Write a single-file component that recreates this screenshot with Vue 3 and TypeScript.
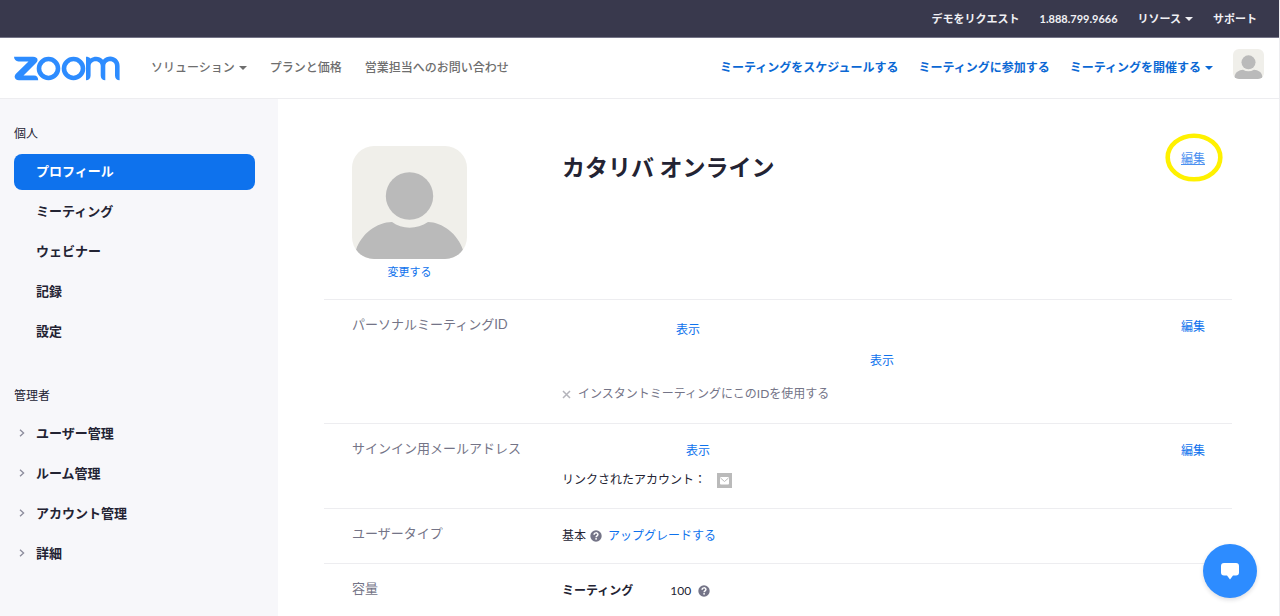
<script setup lang="ts">
interface NavItem {
  label: string
  menu?: boolean
}

const topLinks: NavItem[] = [
  { label: 'デモをリクエスト' },
  { label: '1.888.799.9666' },
  { label: 'リソース', menu: true },
  { label: 'サポート' },
]

const siteLinks: NavItem[] = [
  { label: 'ソリューション', menu: true },
  { label: 'プランと価格' },
  { label: '営業担当へのお問い合わせ' },
]

const meetingLinks: NavItem[] = [
  { label: 'ミーティングをスケジュールする' },
  { label: 'ミーティングに参加する' },
  { label: 'ミーティングを開催する', menu: true },
]

const personal = ['プロフィール', 'ミーティング', 'ウェビナー', '記録', '設定']
const admin = ['ユーザー管理', 'ルーム管理', 'アカウント管理', '詳細']
</script>

<template>
  <div class="page">
    <nav class="topbar" aria-label="サポート">
      <template v-for="item in topLinks" :key="item.label">
        <button v-if="item.menu" type="button" class="nav-link">{{ item.label }}<i class="caret"></i></button>
        <a v-else href="#" class="nav-link">{{ item.label }}</a>
      </template>
    </nav>

    <header class="header">
      <a href="#" class="logo" aria-label="zoom">
        <svg width="106" height="25" viewBox="0 0 106 25" fill="none" stroke="#2d8cff">
          <path d="M0 .8 H19 C23.500 .8 25 4 22 7 L9.500 19.500 H20 C22.800 19.500 24.200 21.500 24.200 24.200 H5 C.8 24.200 -.8 20.500 2.200 17.500 L14.500 5.400 H4.500 C1.800 5.400 .2 3.600 0 .8Z" fill="#2d8cff" stroke="none" />
          <circle cx="34.500" cy="12.500" r="9.500" stroke-width="4.600" />
          <circle cx="59.500" cy="12.500" r="9.500" stroke-width="4.600" />
          <path d="M72 .8 C74 .8 75.500 1.300 76.500 2.500 C80.500 -.3 86 .3 89 3.700 C95 -2.600 105.600 1 105.600 10 V24.200 C102.800 24.200 101 22.500 101 19.500 V10 C101 3.700 91.300 3.700 91.300 10 V24.200 C88.500 24.200 86.700 22.500 86.700 19.500 V10 C86.700 3.700 76.600 3.700 76.600 10 V19.500 C76.600 22.500 74.800 24.200 72 24.200Z" fill="#2d8cff" stroke="none" />
        </svg>
      </a>
      <nav class="site-nav" aria-label="製品">
        <template v-for="item in siteLinks" :key="item.label">
          <button v-if="item.menu" type="button" class="nav-link">{{ item.label }}<i class="caret"></i></button>
          <a v-else href="#" class="nav-link">{{ item.label }}</a>
        </template>
      </nav>
      <nav class="meeting-nav" aria-label="ミーティング">
        <template v-for="item in meetingLinks" :key="item.label">
          <button v-if="item.menu" type="button" class="nav-link">{{ item.label }}<i class="caret"></i></button>
          <a v-else href="#" class="nav-link">{{ item.label }}</a>
        </template>
      </nav>
      <button type="button" class="account" aria-label="アカウント">
        <svg width="31" height="30" viewBox="0 0 115 113" preserveAspectRatio="none">
          <rect width="115" height="113" fill="#f0efea" />
          <circle cx="57.500" cy="50" r="26" fill="#bababa" />
          <path d="M5 113 C5 84 24 80 37 78 Q57 90 78 78 C92 80 110 84 110 113Z" fill="#bababa" />
        </svg>
      </button>
    </header>

    <div class="body">
      <aside class="sidebar">
        <h2 class="group">個人</h2>
        <nav class="side-nav" aria-label="個人">
          <a v-for="(item, i) in personal" :key="item" href="#" class="side-link" :class="{ active: i === 0 }">{{ item }}</a>
        </nav>
        <h2 class="group admin">管理者</h2>
        <nav class="side-nav" aria-label="管理者">
          <a v-for="item in admin" :key="item" href="#" class="side-link expandable">
            <svg width="6" height="8" viewBox="0 0 6 8" fill="none" stroke="#8c8c9c" stroke-width="1.300"><path d="M1 .7 L4.600 4 L1 7.300" /></svg>
            {{ item }}
          </a>
        </nav>
      </aside>

      <main class="main">
        <section class="profile">
          <div class="photo-col">
            <div class="photo">
              <svg width="115" height="113" viewBox="0 0 115 113">
                <rect width="115" height="113" fill="#f0efea" />
                <circle cx="57.500" cy="50" r="23.700" fill="#bababa" />
                <path d="M4 104 C9 88 25 76 40 76 C50 83.500 65 83.500 76 76 C90 76 106 88 111 104 V113 H4Z" fill="#bababa" />
              </svg>
              <a href="#" class="change">変更する</a>
            </div>
          </div>
          <h1 class="name">カタリバ オンライン</h1>
          <a href="#" class="edit marked">編集
            <svg class="ring" width="58" height="49" viewBox="0 0 58 49" fill="none"><ellipse cx="29" cy="24.500" rx="26.300" ry="21.800" stroke="#fff100" stroke-width="4.600" /></svg>
          </a>
        </section>

        <section class="row">
          <h3 class="label">パーソナルミーティングID</h3>
          <div class="value tall">
            <p class="line meeting-id"><a href="#" class="show">表示</a></p>
            <p class="line meeting-url"><a href="#" class="show">表示</a></p>
            <p class="line option">
              <svg width="9" height="9" viewBox="0 0 9 9" stroke="#b4b4bb" stroke-width="1.500"><path d="M1 1 L8 8 M8 1 L1 8" /></svg>
              インスタントミーティングにこのIDを使用する
            </p>
          </div>
          <a href="#" class="edit">編集</a>
        </section>

        <section class="row">
          <h3 class="label">サインイン用メールアドレス</h3>
          <div class="value medium">
            <p class="line email"><a href="#" class="show">表示</a></p>
            <p class="line linked">
              リンクされたアカウント：
              <svg width="15" height="15" viewBox="0 0 15 15"><rect width="15" height="15" fill="#bababa" /><rect x="3" y="4" width="9" height="7.500" rx="1" fill="#fff" /><path d="M3.500 5 L7.500 8.500 L11.500 5" fill="none" stroke="#bababa" /></svg>
            </p>
          </div>
          <a href="#" class="edit">編集</a>
        </section>

        <section class="row">
          <h3 class="label">ユーザータイプ</h3>
          <div class="value">
            <p class="line plan">
              <span class="basic">基本</span>
              <svg width="12" height="12" viewBox="0 0 12 12"><circle cx="6" cy="6" r="5.700" fill="#747487" /><path d="M4.100 4.700 C4.100 2.300 7.900 2.300 7.900 4.500 C7.900 5.900 6.100 5.700 6.100 7.200" fill="none" stroke="#fff" stroke-width="1.500" /><rect x="5.300" y="8.100" width="1.600" height="1.500" fill="#fff" /></svg>
              <a href="#" class="upgrade">アップグレードする</a>
            </p>
          </div>
        </section>

        <section class="row">
          <h3 class="label">容量</h3>
          <div class="value">
            <p class="line capacity">
              <strong>ミーティング</strong>
              <span class="count">100</span>
              <svg width="12" height="12" viewBox="0 0 12 12"><circle cx="6" cy="6" r="5.700" fill="#747487" /><path d="M4.100 4.700 C4.100 2.300 7.900 2.300 7.900 4.500 C7.900 5.900 6.100 5.700 6.100 7.200" fill="none" stroke="#fff" stroke-width="1.500" /><rect x="5.300" y="8.100" width="1.600" height="1.500" fill="#fff" /></svg>
            </p>
          </div>
        </section>
      </main>
    </div>

    <button type="button" class="chat" aria-label="チャット">
      <svg width="18" height="17" viewBox="0 0 18 17" fill="#fff"><path d="M3 0 H15 Q18 0 18 3 V9.500 Q18 12.500 15 12.500 H12 L9 16.500 L6 12.500 H3 Q0 12.500 0 9.500 V3 Q0 0 3 0Z" /></svg>
    </button>
  </div>
</template>

<style>
body {
  margin: 0;
  background: #fff;
}
</style>

<style scoped>
.page {
  display: flex;
  flex-direction: column;
  box-sizing: border-box;
  min-height: 100vh;
  border-right: 1px solid #ededf0;
  color: #232333;
  font-family: Lato, "Noto Sans CJK JP", sans-serif;
  font-size: 13px;
  line-height: 20px;
}

a {
  color: #0e72ed;
  text-decoration: none;
}

button {
  padding: 0;
  border: 0;
  background: none;
  font: inherit;
  color: inherit;
  cursor: pointer;
}

h1,
h2,
h3,
p {
  margin: 0;
}

svg {
  display: block;
  flex: none;
}

.topbar {
  display: flex;
  align-items: center;
  justify-content: flex-end;
  gap: 20px;
  box-sizing: border-box;
  height: 38px;
  padding-right: 22px;
  border-bottom: 1px solid #747487;
  background: #39394d;
  color: #f0f0f4;
  font-size: 11px;
  font-weight: 700;
}

.nav-link {
  display: inline-flex;
  align-items: center;
  color: inherit;
  white-space: nowrap;
}

.caret {
  margin-left: 4px;
  border: 4px solid transparent;
  border-top-color: currentColor;
  border-bottom: 0;
}

.header {
  display: flex;
  align-items: center;
  height: 60px;
  padding: 0 15px 0 14px;
  border-bottom: 1px solid #ededf0;
  font-size: 12px;
}

.site-nav {
  display: flex;
  gap: 23px;
  margin-left: 31px;
  color: #6e6e6e;
  font-weight: 500;
}

.meeting-nav {
  display: flex;
  gap: 20px;
  margin-left: auto;
  color: #0b68d4;
  font-weight: 700;
}

.account {
  margin: 0 0 8px 20px;
  overflow: hidden;
  border-radius: 6px;
}

.body {
  display: flex;
  flex: 1;
}

.sidebar {
  flex: none;
  box-sizing: border-box;
  width: 278px;
  padding: 25px 23px 0 14px;
  background: #f7f7fa;
}

.group {
  font-size: 12px;
  font-weight: 400;
}

.group.admin {
  margin-top: 36px;
}

.side-nav {
  display: flex;
  flex-direction: column;
  gap: 4px;
  margin-top: 10px;
}

.side-link {
  display: flex;
  align-items: center;
  box-sizing: border-box;
  height: 36px;
  padding: 0 0 3px 22px;
  border-radius: 8px;
  color: #232333;
  font-weight: 700;
}

.side-link.active {
  background: #0e72ed;
  color: #fff;
}

.side-link.expandable {
  gap: 11px;
  padding-left: 5px;
}

.main {
  flex: 1;
  min-width: 0;
  padding: 0 47px 0 46px;
}

.profile {
  display: flex;
  padding: 47px 27px 17px 28px;
}

.photo-col {
  width: 210px;
}

.photo {
  width: 115px;
  text-align: center;
}

.photo svg {
  border-radius: 22px;
}

.change {
  display: block;
  margin-top: 3px;
  font-size: 11px;
}

.name {
  margin-top: 5px;
  font-size: 23px;
  font-weight: 700;
  line-height: 32px;
}

.edit {
  margin-left: auto;
  font-size: 12px;
  line-height: 26px;
  white-space: nowrap;
}

.edit.marked {
  position: relative;
  height: 26px;
  text-decoration: underline;
  color: #4a90f0;
}

.ring {
  position: absolute;
  top: -13px;
  left: -16px;
  pointer-events: none;
}

.row {
  display: flex;
  padding: 14px 27px 15px 28px;
  border-top: 1px solid #ededf0;
}

.label {
  flex: none;
  width: 210px;
  color: #747487;
  font-size: 13px;
  font-weight: 400;
}

.value {
  display: flex;
  flex-direction: column;
  gap: 3px;
  font-size: 12px;
  line-height: 25px;
}

.value.medium {
  line-height: 26px;
}

.value.tall {
  padding-top: 2px;
  line-height: 28px;
}

.line {
  display: flex;
  align-items: center;
}

.meeting-id {
  padding-left: 114px;
}

.meeting-url {
  padding-left: 308px;
}

.email {
  padding-left: 124px;
}

.option {
  gap: 7px;
  margin-top: 2px;
  color: #747487;
}

.linked {
  gap: 11px;
}

.plan {
  gap: 4px;
}

.upgrade {
  margin-left: 2px;
}

.count {
  margin-left: 37px;
}

.capacity svg {
  margin-left: 7px;
}

.chat {
  display: grid;
  place-items: center;
  position: fixed;
  right: 23px;
  bottom: 18px;
  width: 54px;
  height: 54px;
  border-radius: 50%;
  background: #2d8cff;
  box-shadow: 0 2px 4px rgba(35, 35, 51, 0.15);
}
</style>
